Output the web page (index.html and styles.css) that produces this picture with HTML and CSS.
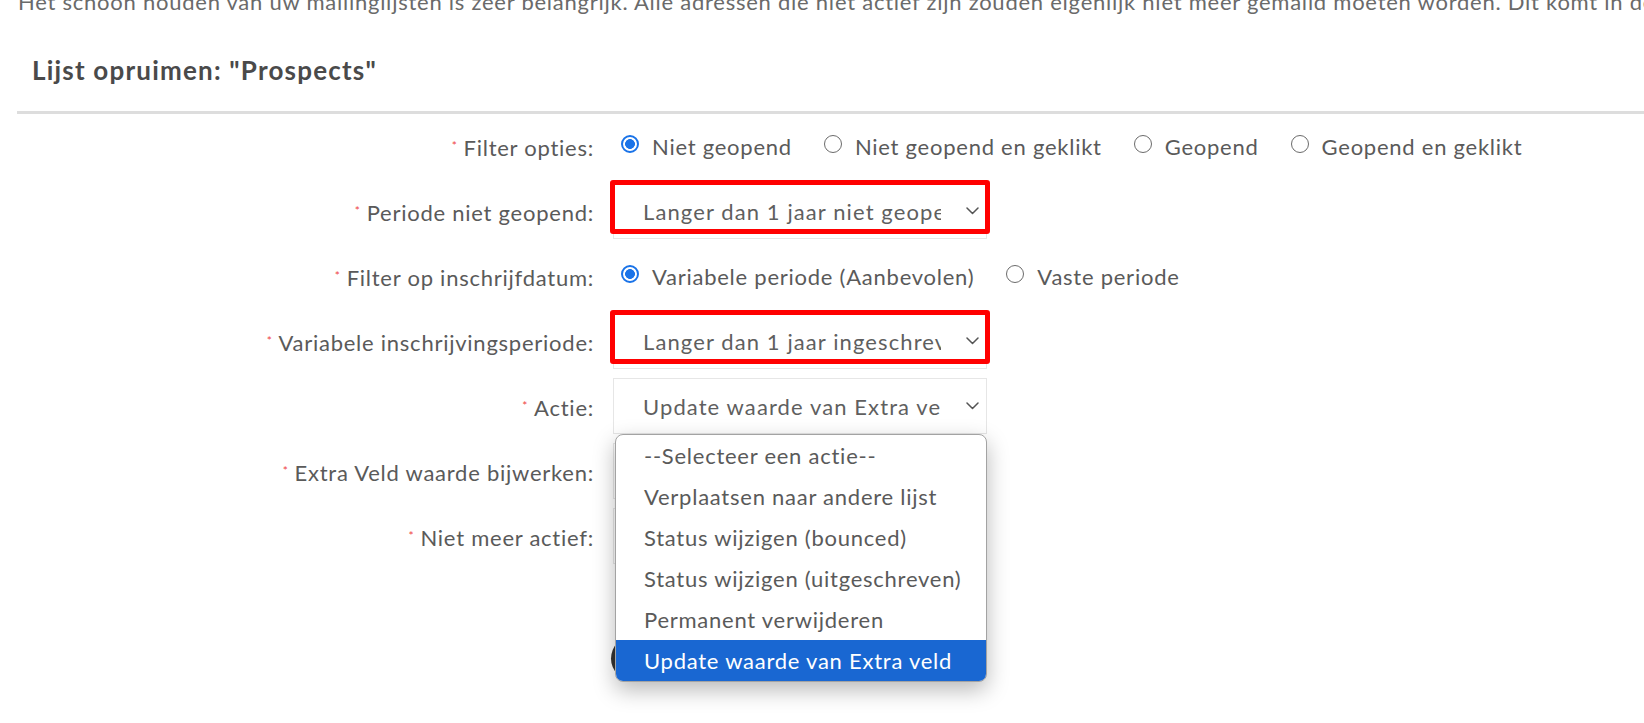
FILE: index.html
```html
<!DOCTYPE html>
<html lang="nl">
<head>
<meta charset="utf-8">
<title>Lijst opruimen</title>
<link rel="stylesheet" href="styles.css">
</head>
<body>
<p class="intro">Het schoon houden van uw mailinglijsten is zeer belangrijk. Alle adressen die niet actief zijn zouden eigenlijk niet meer gemaild moeten worden. Dit komt in de afleverbaarheid van uw e-mails ten goede.</p>
<div class="panel">
  <h2 class="title">Lijst opruimen: "Prospects"</h2>
  <div class="form">
    <div class="label"><span class="req">*</span>Filter opties:</div>
    <div class="control radios">
      <label class="opt"><input type="radio" name="f" checked><span>Niet geopend</span></label>
      <label class="opt"><input type="radio" name="f"><span>Niet geopend en geklikt</span></label>
      <label class="opt"><input type="radio" name="f"><span>Geopend</span></label>
      <label class="opt"><input type="radio" name="f"><span>Geopend en geklikt</span></label>
    </div>

    <div class="label"><span class="req">*</span>Periode niet geopend:</div>
    <div class="control">
      <div class="select">
        <span class="select-text">Langer dan 1 jaar niet geopend</span>
        <svg class="chev" viewBox="0 0 13 8" width="13" height="8"><polyline points="1,1 6.5,6.5 12,1" fill="none" stroke="#555" stroke-width="1.5" stroke-linecap="round" stroke-linejoin="round"/></svg>
        <span class="mark"></span>
      </div>
    </div>

    <div class="label"><span class="req">*</span>Filter op inschrijfdatum:</div>
    <div class="control radios">
      <label class="opt"><input type="radio" name="p" checked><span>Variabele periode (Aanbevolen)</span></label>
      <label class="opt"><input type="radio" name="p"><span>Vaste periode</span></label>
    </div>

    <div class="label"><span class="req">*</span>Variabele inschrijvingsperiode:</div>
    <div class="control">
      <div class="select">
        <span class="select-text">Langer dan 1 jaar ingeschreven</span>
        <svg class="chev" viewBox="0 0 13 8" width="13" height="8"><polyline points="1,1 6.5,6.5 12,1" fill="none" stroke="#555" stroke-width="1.5" stroke-linecap="round" stroke-linejoin="round"/></svg>
        <span class="mark"></span>
      </div>
    </div>

    <div class="label"><span class="req">*</span>Actie:</div>
    <div class="control">
      <div class="select">
        <span class="select-text">Update waarde van Extra veld</span>
        <svg class="chev" viewBox="0 0 13 8" width="13" height="8"><polyline points="1,1 6.5,6.5 12,1" fill="none" stroke="#555" stroke-width="1.5" stroke-linecap="round" stroke-linejoin="round"/></svg>
        <ul class="menu">
          <li>--Selecteer een actie--</li>
          <li>Verplaatsen naar andere lijst</li>
          <li>Status wijzigen (bounced)</li>
          <li>Status wijzigen (uitgeschreven)</li>
          <li>Permanent verwijderen</li>
          <li class="active">Update waarde van Extra veld</li>
        </ul>
      </div>
    </div>

    <div class="label"><span class="req">*</span>Extra Veld waarde bijwerken:</div>
    <div class="control"><div class="select"></div></div>

    <div class="label"><span class="req">*</span>Niet meer actief:</div>
    <div class="control"><div class="select"></div></div>
  </div>
  <div class="actions">
    <button class="btn btn-wide" aria-label="Opslaan"></button>
    <button class="btn btn-narrow" aria-label="Terug"></button>
  </div>
</div>
</body>
</html>
```

FILE: styles.css
```css
html, body {
  margin: 0;
  padding: 0;
  background: #ffffff;
  overflow: hidden;
}

body {
  font-family: "Lato", "Open Sans", sans-serif;
  font-size: 22px;
  letter-spacing: 0.75px;
  color: #5a5a5a;
  width: 1644px;
  height: 723px;
}

.intro {
  margin: -11px 0 0 18px;
  line-height: 26px;
  white-space: nowrap;
  color: #6a6a6a;
}

.panel {
  margin-left: 17px;
}

.title {
  margin: 40px 0 0 0;
  padding: 0 0 26px 15px;
  font-size: 26px;
  line-height: 30px;
  font-weight: 700;
  letter-spacing: 1.2px;
  color: #4a4a4a;
  border-bottom: 3px solid #dddddd;
}

.form {
  display: grid;
  grid-template-columns: 577px 1fr;
  grid-auto-rows: 56px;
  row-gap: 9px;
  column-gap: 19px;
  margin-top: 4px;
}

.label {
  display: flex;
  align-items: center;
  justify-content: flex-end;
  white-space: nowrap;
  padding-top: 2px;
}

.req {
  color: #ef4444;
  font-size: 12px;
  margin-right: 6px;
  position: relative;
  top: -2px;
}

.control {
  display: flex;
  align-items: center;
}

.radios {
  gap: 24px;
}

.opt {
  display: flex;
  align-items: center;
  gap: 13px;
  white-space: nowrap;
}

.opt input {
  appearance: none;
  -webkit-appearance: none;
  margin: 0 0 0 8px;
  width: 18px;
  height: 18px;
  box-sizing: border-box;
  border-radius: 50%;
  border: 1.4px solid #6b6b6b;
  background: #ffffff;
  position: relative;
  top: -2px;
}

.opt input:checked {
  border: 2px solid #1a73e8;
  background: radial-gradient(circle, #1a73e8 0 4.6px, #ffffff 5.2px);
}

.select {
  position: relative;
  width: 374px;
  height: 56px;
  box-sizing: border-box;
  border: 1px solid #e6e6e6;
  background: #ffffff;
  display: flex;
  align-items: center;
  padding-left: 29px;
}

.select-text {
  width: 298px;
  overflow: hidden;
  white-space: nowrap;
  letter-spacing: 1.1px;
  color: #5f5f5f;
}

.chev {
  margin-left: auto;
  margin-right: 7px;
}

.mark {
  position: absolute;
  top: -4px;
  bottom: 4px;
  left: -4px;
  right: -4px;
  border: 5px solid #ff0000;
  border-radius: 3px;
}

.menu {
  position: absolute;
  top: calc(100% + 1px);
  left: 1px;
  width: 372px;
  box-sizing: border-box;
  margin: 0;
  padding: 0;
  list-style: none;
  background: #ffffff;
  border: 1px solid #a3a3a3;
  border-radius: 8px;
  overflow: hidden;
  box-shadow: 0 8px 22px rgba(0, 0, 0, 0.28);
  z-index: 10;
}

.menu li {
  height: 41px;
  display: flex;
  align-items: center;
  padding-left: 28px;
  white-space: nowrap;
  color: #5a5a5a;
}

.menu li.active {
  background: #1967d2;
  color: #ffffff;
}

.actions {
  display: flex;
  gap: 50px;
  margin: 72px 0 0 594px;
}

.btn {
  border: none;
  background: #333333;
  height: 45px;
  border-radius: 23px;
  padding: 0;
}

.btn-wide {
  width: 146px;
}

.btn-narrow {
  width: 116px;
}
```
